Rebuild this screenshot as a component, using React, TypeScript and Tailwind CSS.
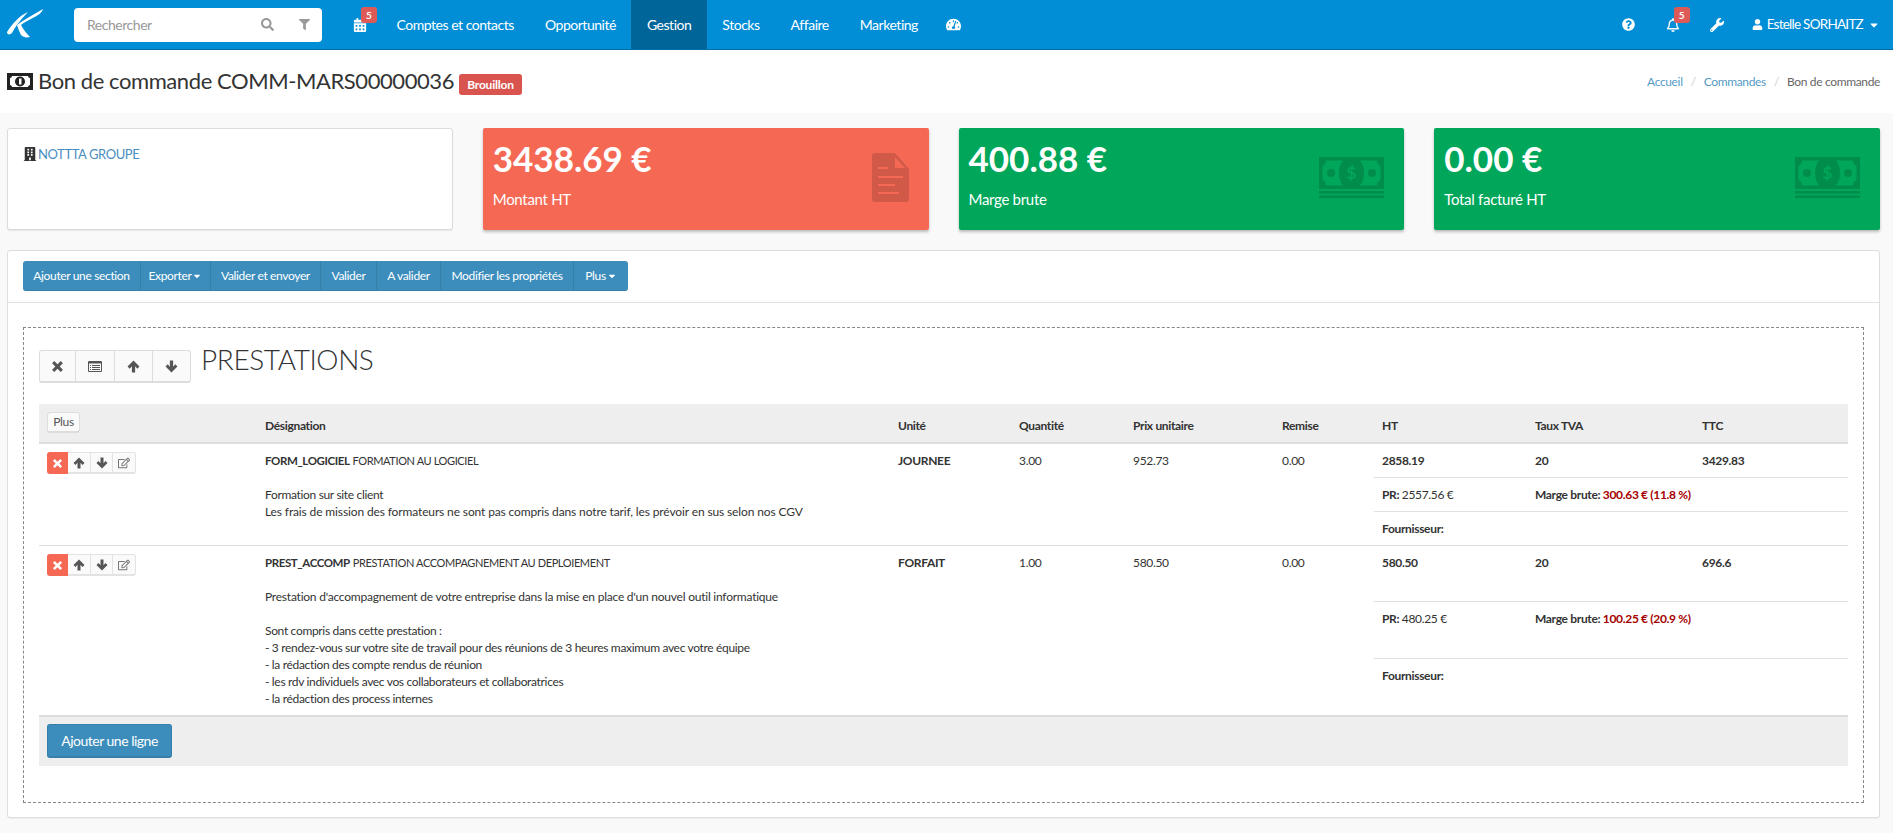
import {
  FaBuilding,
  FaCalendarAlt,
  FaCaretDown,
  FaFilter,
  FaQuestionCircle,
  FaRegBell,
  FaRegEdit,
  FaSearch,
  FaTachometerAlt,
  FaUser,
  FaWrench,
} from "react-icons/fa";

const rowGrid = "grid grid-cols-[218px_633px_121px_114px_149px_100px_153px_167px_154px]";
const subGrid = "grid grid-cols-[153px_167px_154px]";

const Badge = ({ n }: { n: number }) => (
  <span className="absolute -top-[11px] left-[8px] w-[16px] h-[16px] rounded-[3px] bg-[#dd5a57] text-white text-[10px] font-bold leading-[16px] text-center tracking-normal">
    {n}
  </span>
);

const Logo = () => (
  <svg width="60" height="50" viewBox="0 0 60 50" className="shrink-0">
    <path d="M28 12 C20 15 12 24 7 32 C7 35 10 35 12 33 C15 27 21 19 28 12 Z" fill="#fff" />
    <path d="M43 9 C42 13 37 16 31 19 C27 21 23 23 21 25 C23 29 26 33 30 37 C26 38 23 37 21 35 C19 31 18 28 17 25 C24 20 34 14 43 9 Z" fill="#fff" />
  </svg>
);

const RemoveIcon = ({ size }: { size: number }) => (
  <svg width={size} height={size} viewBox="0 0 12 12" fill="currentColor">
    <path d="M1 3 L3 1 L6 4 L9 1 L11 3 L8 6 L11 9 L9 11 L6 8 L3 11 L1 9 L4 6 Z" />
  </svg>
);

const UpIcon = ({ size }: { size: number }) => (
  <svg width={size} height={size} viewBox="0 0 12 12" fill="currentColor">
    <path d="M6 0.5 L11.5 6 L9.5 8 L7.5 5.8 V11.5 H4.5 V5.8 L2.5 8 L0.5 6 Z" />
  </svg>
);

const DownIcon = ({ size }: { size: number }) => (
  <svg width={size} height={size} viewBox="0 0 12 12" fill="currentColor">
    <path d="M6 11.5 L11.5 6 L9.5 4 L7.5 6.2 V0.5 H4.5 V6.2 L2.5 4 L0.5 6 Z" />
  </svg>
);

const ListIcon = () => (
  <svg width="14" height="11" viewBox="0 0 14 11">
    <rect width="14" height="11" rx="1" fill="#555" />
    <rect x="1" y="2.5" width="12" height="7.5" fill="#fafafa" />
    <path d="M2 4 H3 V5 H2 Z M4 4 H12 V5 H4 Z M2 6 H3 V7 H2 Z M4 6 H12 V7 H4 Z M2 8 H3 V9 H2 Z M4 8 H12 V9 H4 Z" fill="#555" />
  </svg>
);

const DocIcon = () => (
  <svg width="37" height="49" viewBox="0 0 37 49" className="text-black/15">
    <path
      fill="currentColor"
      fillRule="evenodd"
      d="M3 0 H23 L37 16 V46 a3 3 0 0 1 -3 3 H3 a3 3 0 0 1 -3 -3 V3 a3 3 0 0 1 3 -3 Z M23 4 V15 H33 Z M6 14 V16 H16 V14 Z M6 23 V25 H31 V23 Z M6 31 V33 H23 V31 Z M6 39 V41 H27 V39 Z"
    />
  </svg>
);

const CashIcon = () => (
  <svg width="65" height="41" viewBox="0 0 65 41" className="text-black/15">
    <path
      fill="currentColor"
      fillRule="evenodd"
      d="M0 0 H65 V32 H0 Z M7 3.5 H24 C21 7 20 11 20 16 C20 21 21 25 24 28.5 H7 C7 25.5 5.5 24 3.5 23 V9 C5.5 8 7 6.5 7 3.5 Z M58 3.5 H41 C44 7 45 11 45 16 C45 21 44 25 41 28.5 H58 C58 25.5 59.5 24 61.5 23 V9 C59.5 8 58 6.5 58 3.5 Z"
    />
    <circle cx="12" cy="16" r="4" fill="currentColor" />
    <circle cx="53" cy="16" r="4" fill="currentColor" />
    <text x="32.5" y="22" textAnchor="middle" fontSize="17" fontWeight="700" fill="#00a65a" fontFamily="Lato, sans-serif">$</text>
    <rect y="34" width="65" height="2.5" fill="currentColor" />
    <rect y="38.5" width="65" height="2.5" fill="currentColor" />
  </svg>
);

const BillIcon = () => (
  <svg width="26" height="17" viewBox="0 0 26 17" className="ml-[1px]">
    <path
      fill="#222"
      fillRule="evenodd"
      d="M0 0 H26 V17 H0 Z M5 3 C5 4 4 5 3 5 V12 C4 12 5 13 5 14 H21 C21 13 22 12 23 12 V5 C22 5 21 4 21 3 Z"
    />
    <circle cx="13" cy="8.5" r="5" fill="#222" />
    <rect x="12" y="5.5" width="2.5" height="6" fill="#fff" />
  </svg>
);

const StatCard = ({
  value,
  label,
  color,
  icon,
  iconTop,
}: {
  value: string;
  label: string;
  color: string;
  icon: React.ReactNode;
  iconTop: string;
}) => (
  <div className={`relative h-[102px] rounded-[2px] pl-[10px] pt-[13px] text-white shadow-[0_2px_3px_rgba(0,0,0,0.25)] ${color}`}>
    <div className="text-[35px] leading-[35px] font-bold">{value}</div>
    <div className="mt-[14px] text-[15px] leading-[18px] tracking-[-0.3px]">{label}</div>
    <div className={`absolute right-[20px] ${iconTop}`}>{icon}</div>
  </div>
);

const toolbar = [
  { label: "Ajouter une section", w: "w-[118px]" },
  { label: "Exporter", w: "w-[70px]", caret: true },
  { label: "Valider et envoyer", w: "w-[110px]" },
  { label: "Valider", w: "w-[56px]" },
  { label: "A valider", w: "w-[64px]" },
  { label: "Modifier les propriétés", w: "w-[133px]" },
  { label: "Plus", w: "w-[54px]", caret: true },
];

const Sub = ({ h, border, children }: { h: string; border?: boolean; children: React.ReactNode }) => (
  <div className={`${subGrid} ${h} ${border ? "border-b border-[#e0e0e0]" : ""} pt-[8px]`}>{children}</div>
);

const ActionGroup = () => (
  <div className="flex w-[89px] h-[22px] rounded-[3px] border border-[#e3e3e3] border-b-[2px] text-[#555] bg-[#fafafa]">
    <span className="-m-[1px] -mb-[2px] w-[21px] flex items-center justify-center rounded-l-[3px] bg-[#f56954] text-white">
      <RemoveIcon size={11} />
    </span>
    <span className="w-[23px] ml-[1px] flex items-center justify-center border-r border-[#e3e3e3]">
      <UpIcon size={12} />
    </span>
    <span className="w-[22px] flex items-center justify-center border-r border-[#e3e3e3]">
      <DownIcon size={12} />
    </span>
    <span className="flex-1 flex items-center justify-center text-[#777] text-[12px]">
      <FaRegEdit />
    </span>
  </div>
);

export default function App() {
  return (
    <div className="min-h-[833px] bg-[#f9f9f9] text-[#333] font-['Lato',sans-serif] overflow-hidden">
      <nav className="h-[50px] bg-[#028ed6] border-b border-[#016ea6] flex items-center text-white text-[14px] tracking-[-0.47px]">
        <div className="w-[74px] flex items-center">
          <Logo />
        </div>
        <div className="flex items-center w-[248px] h-[34px] rounded-[4px] bg-white pl-[13px] pr-[12px] text-[#999] shrink-0">
          <span className="flex-1">Rechercher</span>
          <FaSearch className="text-[13px] text-[#999] mr-[25px]" />
          <FaFilter className="text-[11px] text-[#999]" />
        </div>
        <div className="relative ml-[31px] mr-[14px] text-[14px]">
          <FaCalendarAlt />
          <Badge n={5} />
        </div>
        <div className="flex items-center h-full">
          {["Comptes et contacts", "Opportunité", "Gestion", "Stocks", "Affaire", "Marketing"].map((t) => (
            <a key={t} className={`h-full flex items-center px-[15.5px] ${t === "Gestion" ? "bg-[#006699]" : ""}`}>
              {t}
            </a>
          ))}
          <span className="px-[13px] text-[15px]">
            <FaTachometerAlt />
          </span>
        </div>
        <div className="ml-auto flex items-center pr-[13px]">
          <FaQuestionCircle className="text-[13px] mr-[31px]" />
          <span className="relative mr-[30px] text-[14px]">
            <FaRegBell />
            <Badge n={5} />
          </span>
          <FaWrench className="text-[14px] mr-[28px]" />
          <FaUser className="text-[11px] mr-[4px]" />
          <span className="text-[13.5px] tracking-[-0.75px]">Estelle SORHAITZ</span>
          <FaCaretDown className="text-[12px] ml-[5px]" />
        </div>
      </nav>

      <header className="h-[63px] bg-white flex items-center justify-between pl-[6px] pr-[13px]">
        <div className="flex items-center">
          <BillIcon />
          <h1 className="ml-[5px] mb-[2px] text-[22px] font-normal text-[#333] tracking-[-0.42px]">Bon de commande COMM-MARS00000036</h1>
          <span className="ml-[5px] mt-[5px] w-[63px] h-[21px] rounded-[3px] bg-[#d9534f] text-white text-[12px] font-bold leading-[21px] text-center tracking-[-0.2px]">
            Brouillon
          </span>
        </div>
        <div className="flex text-[12px] tracking-[-0.35px] text-[#666]">
          <a className="text-[#3c8dbc]/90">Accueil</a>
          <span className="mx-[8px] text-[#ccc]">/</span>
          <a className="text-[#3c8dbc]/90">Commandes</a>
          <span className="mx-[8px] text-[#ccc]">/</span>
          <span>Bon de commande</span>
        </div>
      </header>

      <div className="pl-[7px] pt-[15px] pr-[13px]">
        <div className="grid grid-cols-4 gap-[30px]">
          <div className="h-[102px] bg-white rounded-[3px] border border-[#dcdcdc] shadow-[0_1px_1px_rgba(0,0,0,0.08)] pl-[15px] pt-[16px] text-[13px] tracking-[-0.4px] flex items-start">
            <FaBuilding className="text-[#333] text-[14px] mt-[2px] mr-[1px]" />
            <a className="text-[#4a8dc0]">NOTTTA GROUPE</a>
          </div>
          <StatCard value="3438.69 €" label="Montant HT" color="bg-[#f56954]" icon={<DocIcon />} iconTop="top-[25px]" />
          <StatCard value="400.88 €" label="Marge brute" color="bg-[#00a65a]" icon={<CashIcon />} iconTop="top-[29px]" />
          <StatCard value="0.00 €" label="Total facturé HT" color="bg-[#00a65a]" icon={<CashIcon />} iconTop="top-[29px]" />
        </div>

        <section className="mt-[20px] h-[568px] bg-white rounded-[3px] border border-[#dedede] shadow-[0_1px_1px_rgba(0,0,0,0.05)]">
          <div className="h-[52px] border-b border-[#e2e2e2] pl-[15px] pt-[10px]">
            <div className="flex w-fit h-[30px] rounded-[3px] overflow-hidden bg-[#3c8dbc] border-b border-[#367fa9] text-white text-[12px] tracking-[-0.35px]">
              {toolbar.map((b) => (
                <span key={b.label} className={`${b.w} flex items-center justify-center border-r border-[#367fa9] last:border-r-0`}>
                  {b.label}
                  {b.caret && <FaCaretDown className="text-[10px] ml-[1px]" />}
                </span>
              ))}
            </div>
          </div>

          <div className="mx-[15px] mt-[24px] h-[476px] border border-dashed border-[#888] px-[15px] pt-[22px]">
            <div className="flex items-start">
              <div className="flex w-[152px] h-[33px] rounded-[3px] border border-[#ddd] border-b-[2px] bg-[#fafafa] text-[#555]">
                <span className="w-[36px] flex items-center justify-center border-r border-[#ddd]">
                  <RemoveIcon size={13} />
                </span>
                <span className="w-[39px] flex items-center justify-center border-r border-[#ddd]">
                  <ListIcon />
                </span>
                <span className="w-[38px] flex items-center justify-center border-r border-[#ddd]">
                  <UpIcon size={13} />
                </span>
                <span className="flex-1 flex items-center justify-center">
                  <DownIcon size={13} />
                </span>
              </div>
              <h2 className="ml-[10px] -mt-[9px] text-[28px] leading-[36px] font-light text-[#333] tracking-[-0.4px]">PRESTATIONS</h2>
            </div>

            <div className="mt-[21px] text-[12px] leading-[17px] tracking-[-0.33px] text-[#333]">
              <div className={`${rowGrid} h-[40px] bg-[#eeeeee] border-b-[2px] border-[#dddddd] font-bold`}>
                <div className="pl-[8px] pt-[8px]">
                  <span className="inline-block w-[33px] h-[21px] rounded-[3px] border border-[#ddd] border-b-[2px] bg-[#fafafa] text-center font-normal leading-[18px] text-[#555]">
                    Plus
                  </span>
                </div>
                {["Désignation", "Unité", "Quantité", "Prix unitaire", "Remise", "HT", "Taux TVA", "TTC"].map((h) => (
                  <div key={h} className="pl-[8px] pt-[13px]">
                    {h}
                  </div>
                ))}
              </div>

              <div className={`${rowGrid} h-[102px] border-b border-[#dedede]`}>
                <div className="pl-[8px] pt-[8px]">
                  <ActionGroup />
                </div>
                <div className="pl-[8px] pt-[8px]">
                  <div className="flex items-baseline">
                    <b className="text-[11.5px] tracking-[-0.4px]">FORM_LOGICIEL</b>
                    <span className="ml-[3px] text-[11px] tracking-[-0.38px]">FORMATION AU LOGICIEL</span>
                  </div>
                  <div className="mt-[17px]">Formation sur site client</div>
                  <div className="tracking-[-0.13px]">Les frais de mission des formateurs ne sont pas compris dans notre tarif, les prévoir en sus selon nos CGV</div>
                </div>
                <div className="pl-[8px] pt-[8px] font-bold">JOURNEE</div>
                <div className="pl-[8px] pt-[8px]">3.00</div>
                <div className="pl-[8px] pt-[8px]">952.73</div>
                <div className="pl-[8px] pt-[8px]">0.00</div>
                <div className="col-span-3 font-bold">
                  <Sub h="h-[34px]" border>
                    <div className="pl-[8px]">2858.19</div>
                    <div className="pl-[8px]">20</div>
                    <div className="pl-[8px]">3429.83</div>
                  </Sub>
                  <Sub h="h-[34px]" border>
                    <div className="pl-[8px]">
                      PR: <span className="font-normal">2557.56 €</span>
                    </div>
                    <div className="pl-[8px] col-span-2">
                      Marge brute: <span className="text-[#a60000]">300.63 € (11.8 %)</span>
                    </div>
                  </Sub>
                  <Sub h="h-[33px]">
                    <div className="pl-[8px]">Fournisseur:</div>
                  </Sub>
                </div>
              </div>

              <div className={`${rowGrid} h-[169px]`}>
                <div className="pl-[8px] pt-[8px]">
                  <ActionGroup />
                </div>
                <div className="pl-[8px] pt-[8px]">
                  <div className="flex items-baseline">
                    <b className="text-[11.5px] tracking-[-0.4px]">PREST_ACCOMP</b>
                    <span className="ml-[3px] text-[11px] tracking-[-0.38px]">PRESTATION ACCOMPAGNEMENT AU DEPLOIEMENT</span>
                  </div>
                  <div className="mt-[17px] tracking-[-0.23px]">Prestation d'accompagnement de votre entreprise dans la mise en place d'un nouvel outil informatique</div>
                  <div className="mt-[17px]">Sont compris dans cette prestation :</div>
                  <div>- 3 rendez-vous sur votre site de travail pour des réunions de 3 heures maximum avec votre équipe</div>
                  <div>- la rédaction des compte rendus de réunion</div>
                  <div>- les rdv individuels avec vos collaborateurs et collaboratrices</div>
                  <div>- la rédaction des process internes</div>
                </div>
                <div className="pl-[8px] pt-[8px] font-bold">FORFAIT</div>
                <div className="pl-[8px] pt-[8px]">1.00</div>
                <div className="pl-[8px] pt-[8px]">580.50</div>
                <div className="pl-[8px] pt-[8px]">0.00</div>
                <div className="col-span-3 font-bold">
                  <Sub h="h-[56px]" border>
                    <div className="pl-[8px]">580.50</div>
                    <div className="pl-[8px]">20</div>
                    <div className="pl-[8px]">696.6</div>
                  </Sub>
                  <Sub h="h-[57px]" border>
                    <div className="pl-[8px]">
                      PR: <span className="font-normal">480.25 €</span>
                    </div>
                    <div className="pl-[8px] col-span-2">
                      Marge brute: <span className="text-[#a60000]">100.25 € (20.9 %)</span>
                    </div>
                  </Sub>
                  <Sub h="h-[56px]">
                    <div className="pl-[8px]">Fournisseur:</div>
                  </Sub>
                </div>
              </div>

              <div className="h-[51px] bg-[#eeeeee] border-t-[2px] border-[#dddddd] pl-[8px] pt-[7px]">
                <button className="w-[125px] h-[34px] rounded-[3px] bg-[#3c8dbc] border border-[#367fa9] border-b-[2px] text-white text-[14px] tracking-[-0.5px]">
                  Ajouter une ligne
                </button>
              </div>
            </div>
          </div>
        </section>
      </div>
    </div>
  );
}
